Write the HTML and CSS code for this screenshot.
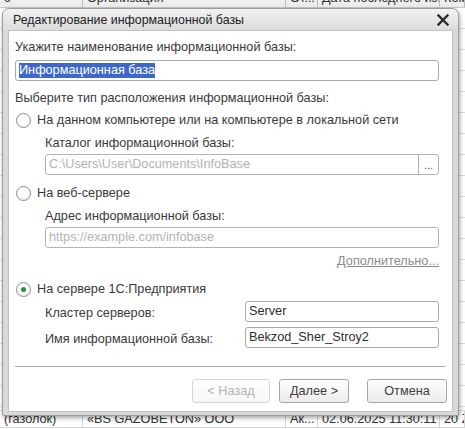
FILE: index.html
```html
<!DOCTYPE html>
<html lang="ru">
<head>
<meta charset="utf-8">
<title>Редактирование информационной базы</title>
<link rel="stylesheet" href="styles.css">
</head>
<body>
<div class="screen">
  <div class="table">
    <div class="trow thead">
      <div class="cell">с</div>
      <div class="cell">Организация</div>
      <div class="cell">От...</div>
      <div class="cell">Дата последнего из...</div>
      <div class="cell">Ком...</div>
    </div>
    <div class="filler"></div>
    <div class="trow tlast">
      <div class="cell">(газолок)</div>
      <div class="cell">«BS GAZOBETON» ООО</div>
      <div class="cell">Ак...</div>
      <div class="cell">02.06.2025 11:30:11</div>
      <div class="cell">20 Z</div>
    </div>
  </div>

  <div class="dialog">
    <div class="titlebar">
      <span class="title">Редактирование информационной базы</span>
      <svg class="close" width="12" height="12" viewBox="0 0 12 12"><path d="M1.5 1.5 L10.5 10.5 M10.5 1.5 L1.5 10.5" stroke="#2b2b2b" stroke-width="2.4" stroke-linecap="square"/></svg>
    </div>
    <div class="panel">
      <div class="form">
        <div class="lbl l1">Укажите наименование информационной базы:</div>
        <div class="input"><span class="sel">Информационная база</span></div>
        <div class="lbl l2">Выберите тип расположения информационной базы:</div>

        <div class="radio r1"><span class="circle"></span><span>На данном компьютере или на компьютере в локальной сети</span></div>
        <div class="sub">
          <div class="lbl s1">Каталог информационной базы:</div>
          <div class="input dis withbtn"><span class="ph">C:\Users\User\Documents\InfoBase</span><span class="dots">...</span></div>
        </div>

        <div class="radio r2"><span class="circle"></span><span>На веб-сервере</span></div>
        <div class="sub">
          <div class="lbl s1">Адрес информационной базы:</div>
          <div class="input dis s2"><span class="ph">https://example.com/infobase</span></div>
          <div class="more"><span class="link">Дополнительно...</span></div>
        </div>

        <div class="radio r3"><span class="circle on"></span><span>На сервере 1С:Предприятия</span></div>
        <div class="sub">
          <div class="grid g1">
            <div class="lbl glbl">Кластер серверов:</div>
            <div class="input">Server</div>
          </div>
          <div class="grid g2">
            <div class="lbl glbl">Имя информационной базы:</div>
            <div class="input">Bekzod_Sher_Stroy2</div>
          </div>
        </div>
      </div>
      <div class="sep"></div>
      <div class="buttons">
        <div class="btn back disabled">&lt; Назад</div>
        <div class="btn next">Далее &gt;</div>
        <div class="btn cancel">Отмена</div>
      </div>
    </div>
  </div>
</div>
</body>
</html>
```
FILE: styles.css
```css
* { box-sizing: border-box; }
html, body { margin: 0; padding: 0; }
body {
  width: 465px;
  height: 429px;
  overflow: hidden;
  background: #ffffff;
  font-family: "Liberation Sans", Arial, sans-serif;
  font-size: 12.7px;
  color: #3a3a3a;
}
.screen {
  position: relative;
  width: 465px;
  height: 429px;
  overflow: hidden;
}

/* background table */
.table {
  margin-top: -11px;
  display: flex;
  flex-direction: column;
}
.trow {
  display: grid;
  grid-template-columns: 83px 203px 32px 122px 1fr;
  height: 18px;
}
.cell {
  border-right: 1px solid #d6d6d6;
  padding-left: 4px;
  line-height: 18px;
  white-space: nowrap;
  overflow: hidden;
  color: #333;
}
.thead {
  height: 19px;
  background: linear-gradient(#f7f7f7, #ebebeb);
  border-bottom: 1px solid #c8c8c8;
}
.thead .cell { border-right-color: #bdbdbd; }
.filler {
  height: 402px;
  background: repeating-linear-gradient(#ffffff 0 20px, #dcdcdc 20px 21px);
}
.tlast {
  border-top: 1px solid #dcdcdc;
  border-bottom: 1px solid #cfe3cf;
}
.tlast .cell { line-height: 16px; }

/* dialog */
.dialog {
  position: absolute;
  left: 2px;
  top: 8px;
  width: 457px;
  height: 408px;
  border: 1px solid #9c9c9c;
  border-radius: 7px 7px 2px 2px;
  background: #d9d9d9;
  box-shadow: 1px 2px 4px rgba(0,0,0,0.35);
  display: flex;
  flex-direction: column;
  padding: 0 5px 3px 5px;
}
.titlebar {
  height: 21px;
  display: flex;
  align-items: center;
  justify-content: space-between;
  margin: 0 -5px;
  padding: 0 9px 0 10px;
  border-radius: 6px 6px 0 0;
  background: linear-gradient(#f2f2f2, #dcdcdc);
}
.title {
  font-size: 12.4px;
  color: #222;
  padding-top: 1px;
}
.close { display: block; }

.panel {
  flex: 1;
  background: #ffffff;
  border: 1px solid #c2c2c2;
  padding: 8px 5px 0 6px;
  display: flex;
  flex-direction: column;
}
.form { margin-right: 8px; }
.lbl { line-height: 16px; white-space: nowrap; }
.l1 { margin-bottom: 5px; }
.input {
  height: 21px;
  border: 1px solid #a9a9a9;
  border-radius: 3px;
  background: #fff;
  padding-left: 3px;
  line-height: 19px;
  color: #2e2e2e;
  white-space: nowrap;
  overflow: hidden;
  display: flex;
  align-items: center;
}
.sel {
  background: #3d68c9;
  color: #fff;
  line-height: 15px;
}
.l2 { margin-top: 9px; }

.radio {
  display: flex;
  align-items: center;
  gap: 6px;
  height: 16px;
  line-height: 16px;
  white-space: nowrap;
}
.r1 { margin-top: 6px; }
.r2 { margin-top: 10px; }
.r3 { margin-top: 12px; }
.circle {
  width: 15px;
  height: 15px;
  margin-left: 1px;
  border-radius: 50%;
  border: 1px solid #8e8e8e;
  background: radial-gradient(circle at 50% 40%, #ffffff 40%, #e6e6e6 100%);
  display: flex;
  align-items: center;
  justify-content: center;
  flex: none;
}
.circle.on::after {
  content: "";
  width: 5px;
  height: 5px;
  border-radius: 50%;
  background: #179b3b;
}

.sub { padding-left: 30px; }
.s1 { margin-top: 7px; margin-bottom: 3px; }
.s2 { margin-top: 2px; }
.dis { border-color: #b4b4b4; }
.ph { color: #b3b3b3; flex: 1; overflow: hidden; }
.withbtn { padding-right: 0; }
.dots {
  width: 20px;
  height: 100%;
  border-left: 1px solid #b4b4b4;
  text-align: center;
  color: #555;
  font-size: 11px;
  line-height: 20px;
  flex: none;
}
.more {
  margin-top: 5px;
  line-height: 16px;
  text-align: right;
}
.link {
  color: #8c8c8c;
  text-decoration: underline;
}

.grid {
  display: grid;
  grid-template-columns: 200px 1fr;
  align-items: center;
}
.g1 { margin-top: 4px; }
.g2 { margin-top: 5px; }
.glbl { padding-top: 2px; }

.sep {
  margin-top: 18px;
  margin-right: 2px;
  height: 1px;
  background: #a6a6a6;
}
.buttons {
  margin-top: 12px;
  display: flex;
  justify-content: flex-end;
}
.btn {
  height: 24px;
  border: 1px solid #a6a6a6;
  border-radius: 3px;
  background: linear-gradient(#ffffff, #ececec);
  color: #404040;
  display: flex;
  align-items: center;
  justify-content: center;
}
.back { width: 78px; }
.next { width: 70px; margin-left: 9px; }
.cancel { width: 80px; margin-left: 18px; }
.disabled {
  border-color: #d6d6d6;
  color: #b4b4b4;
  background: linear-gradient(#ffffff, #f6f6f6);
}
```
